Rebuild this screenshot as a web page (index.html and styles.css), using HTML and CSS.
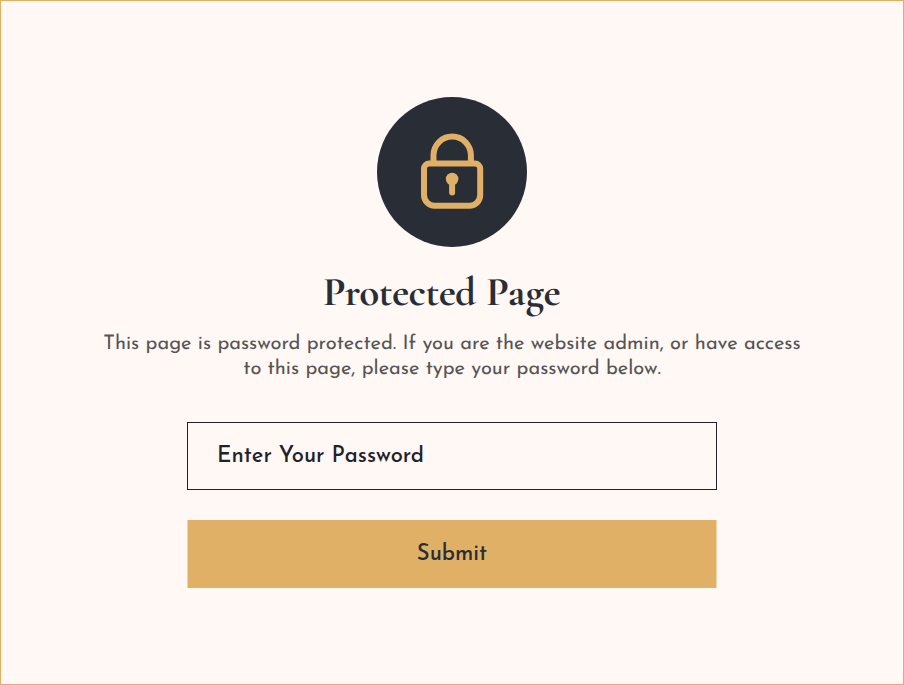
FILE: index.html
```html
<!DOCTYPE html>
<html lang="en">
<head>
<meta charset="utf-8">
<title>Protected Page</title>
<link rel="stylesheet" href="styles.css">
</head>
<body>
<main class="page">
  <div class="badge">
    <svg class="lock" viewBox="0 0 64 80" fill="none">
      <path d="M13.500 30V23.300a18.700 18.700 0 0 1 37.400 0V30" stroke="currentColor" stroke-width="6"/>
      <path d="M9.200 31.500H55a5.200 5.200 0 0 1 5.200 5.200V63a10.700 10.700 0 0 1-10.700 10.700H14.700A10.700 10.700 0 0 1 4 63V36.700a5.200 5.200 0 0 1 5.200-5.200Z" stroke="currentColor" stroke-width="6"/>
      <circle cx="32.100" cy="47" r="6.300" fill="currentColor"/>
      <path d="M32.100 47v13.600" stroke="currentColor" stroke-width="6" stroke-linecap="round"/>
    </svg>
  </div>
  <h1 class="title"><span class="title-lead">Protected</span> Page</h1>
  <p class="message"><span class="line">This page is password protected. If you are the website admin, or have access</span> <span class="line">to this page, please type your password below.</span></p>
  <form class="form">
    <input class="field" type="password" placeholder="Enter Your Password" aria-label="Password">
    <button class="submit" type="button">Submit</button>
  </form>
</main>
</body>
</html>
```
FILE: styles.css
```css
* { box-sizing: border-box; }
body { margin: 0; }
.page {
  height: 685px;
  padding-top: 96px;
  border: 1px solid #e0b066;
  background: #fff8f5;
  color: #292d36;
  font-family: "Josefin Sans", Lato, sans-serif;
  text-rendering: geometricPrecision;
  display: flex;
  flex-direction: column;
  align-items: center;
}
.badge {
  width: 150px;
  height: 150px;
  border-radius: 50%;
  background: #292d36;
  color: #e0b066;
  display: grid;
  place-items: center;
}
.lock { width: 64px; height: 80px; }
.title {
  margin: 21px 20px 0 0;
  font: 700 41px/48px "Cormorant Garamond", "Liberation Serif", serif;
  letter-spacing: 0.2px;
  white-space: nowrap;
}
.title-lead { letter-spacing: -0.5px; margin-right: 1px; }
.message {
  margin: 16px 0 0;
  color: #555;
  font-size: 20px;
  font-weight: 400;
  line-height: 25px;
  text-align: center;
}
.line { display: block; white-space: nowrap; }
.form {
  width: 530px;
  margin-top: 40px;
  display: grid;
  gap: 30px;
}
.field, .submit {
  height: 68px;
  font: 500 22px/28px "Josefin Sans", Lato, sans-serif;
  color: #292d36;
  border-radius: 0;
}
.field {
  padding: 1px 29px 0;
  border: 1px solid #1e222b;
  background: transparent;
}
.field::placeholder { color: #1e222b; opacity: 1; }
.submit {
  padding: 2px 0 0;
  border: solid #f0d4ad;
  border-width: 0 1px;
  background: #e0b066;
}
```
